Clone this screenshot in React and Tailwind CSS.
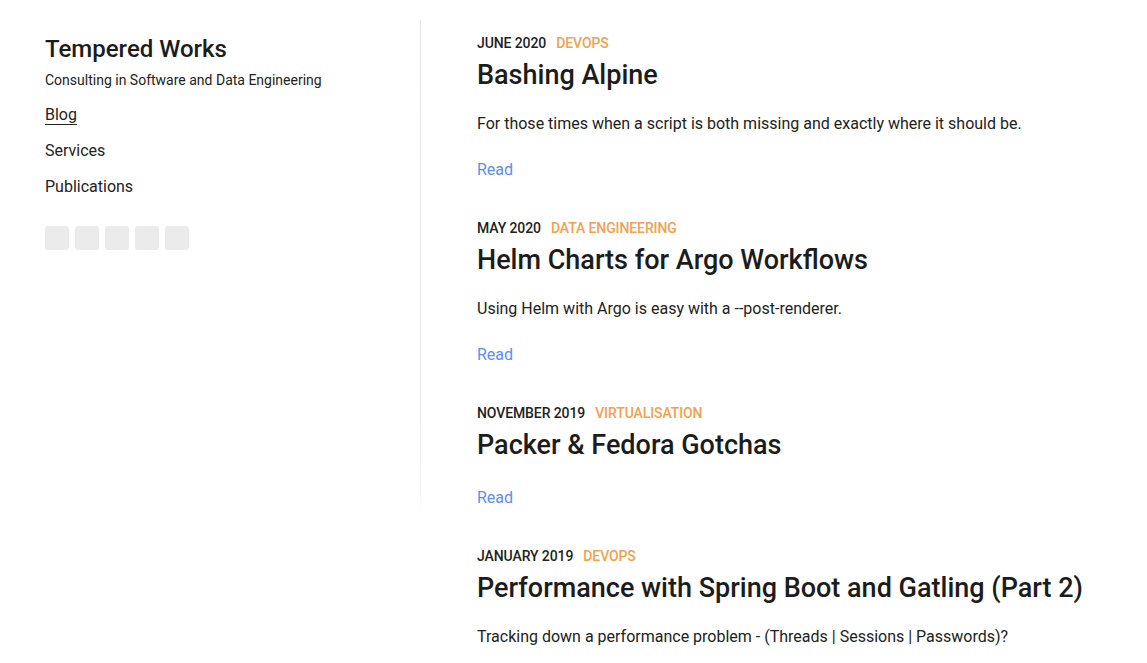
import React from 'react';

const posts = [
  {
    date: 'June 2020',
    category: 'DevOps',
    title: 'Bashing Alpine',
    summary: 'For those times when a script is both missing and exactly where it should be.',
  },
  {
    date: 'May 2020',
    category: 'Data Engineering',
    title: 'Helm Charts for Argo Workflows',
    summary: 'Using Helm with Argo is easy with a --post-renderer.',
  },
  {
    date: 'November 2019',
    category: 'Virtualisation',
    title: 'Packer & Fedora Gotchas',
  },
  {
    date: 'January 2019',
    category: 'DevOps',
    title: 'Performance with Spring Boot and Gatling (Part 2)',
    summary: 'Tracking down a performance problem - (Threads | Sessions | Passwords)?',
  },
];

const Sidebar = () => (
  <aside className="flex w-[421px] shrink-0 pt-[20px]">
    <div className="flex-1 pl-[45px] pt-[13px]">
      <h1 className="text-[24px] leading-[32px] font-medium text-[#1c1c1c]">Tempered Works</h1>
      <p className="mt-[5px] text-[14px] leading-[20px] text-[#222]">
        Consulting in Software and Data Engineering
      </p>
      <nav className="mt-[13px] flex flex-col gap-[12px] text-[16px] leading-[24px] text-[#222]">
        <a href="#" className="self-start underline decoration-1 underline-offset-[4px]">Blog</a>
        <a href="#" className="self-start">Services</a>
        <a href="#" className="self-start">Publications</a>
      </nav>
      <div className="mt-[27px] flex gap-[6px]">
        {[0, 1, 2, 3, 4].map((i) => (
          <span key={i} className="h-[24px] w-[24px] rounded-[3px] bg-[#ebebeb]" />
        ))}
      </div>
    </div>
    <div className="h-[500px] w-px bg-gradient-to-b from-[#e6e6e6] via-[#ececec] via-85% to-white" />
  </aside>
);

const Post = ({ date, category, title, summary }) => (
  <article>
    <div className="flex gap-[10px] text-[14px] leading-[20px] font-medium uppercase tracking-[-0.1px]">
      <span className="text-[#222]">{date}</span>
      <span className="text-[#f5a04e]">{category}</span>
    </div>
    <h2 className="mt-[4px] text-[27px] leading-[36px] font-medium text-[#1c1c1c]">{title}</h2>
    {summary && (
      <p className="mt-[19px] text-[16px] leading-[24px] text-[#222]">{summary}</p>
    )}
    <a href="#" className={`${summary ? 'mt-[22px]' : 'mt-[23px]'} block text-[16px] leading-[24px] text-[#5b8ef4]`}>
      Read
    </a>
  </article>
);

export default function App() {
  return (
    <div className="flex min-h-screen bg-white font-['Roboto',sans-serif]">
      <Sidebar />
      <main className="flex flex-col gap-[36px] pl-[56px] pt-[33px]">
        {posts.map((p) => (
          <Post key={p.title} {...p} />
        ))}
      </main>
    </div>
  );
}
